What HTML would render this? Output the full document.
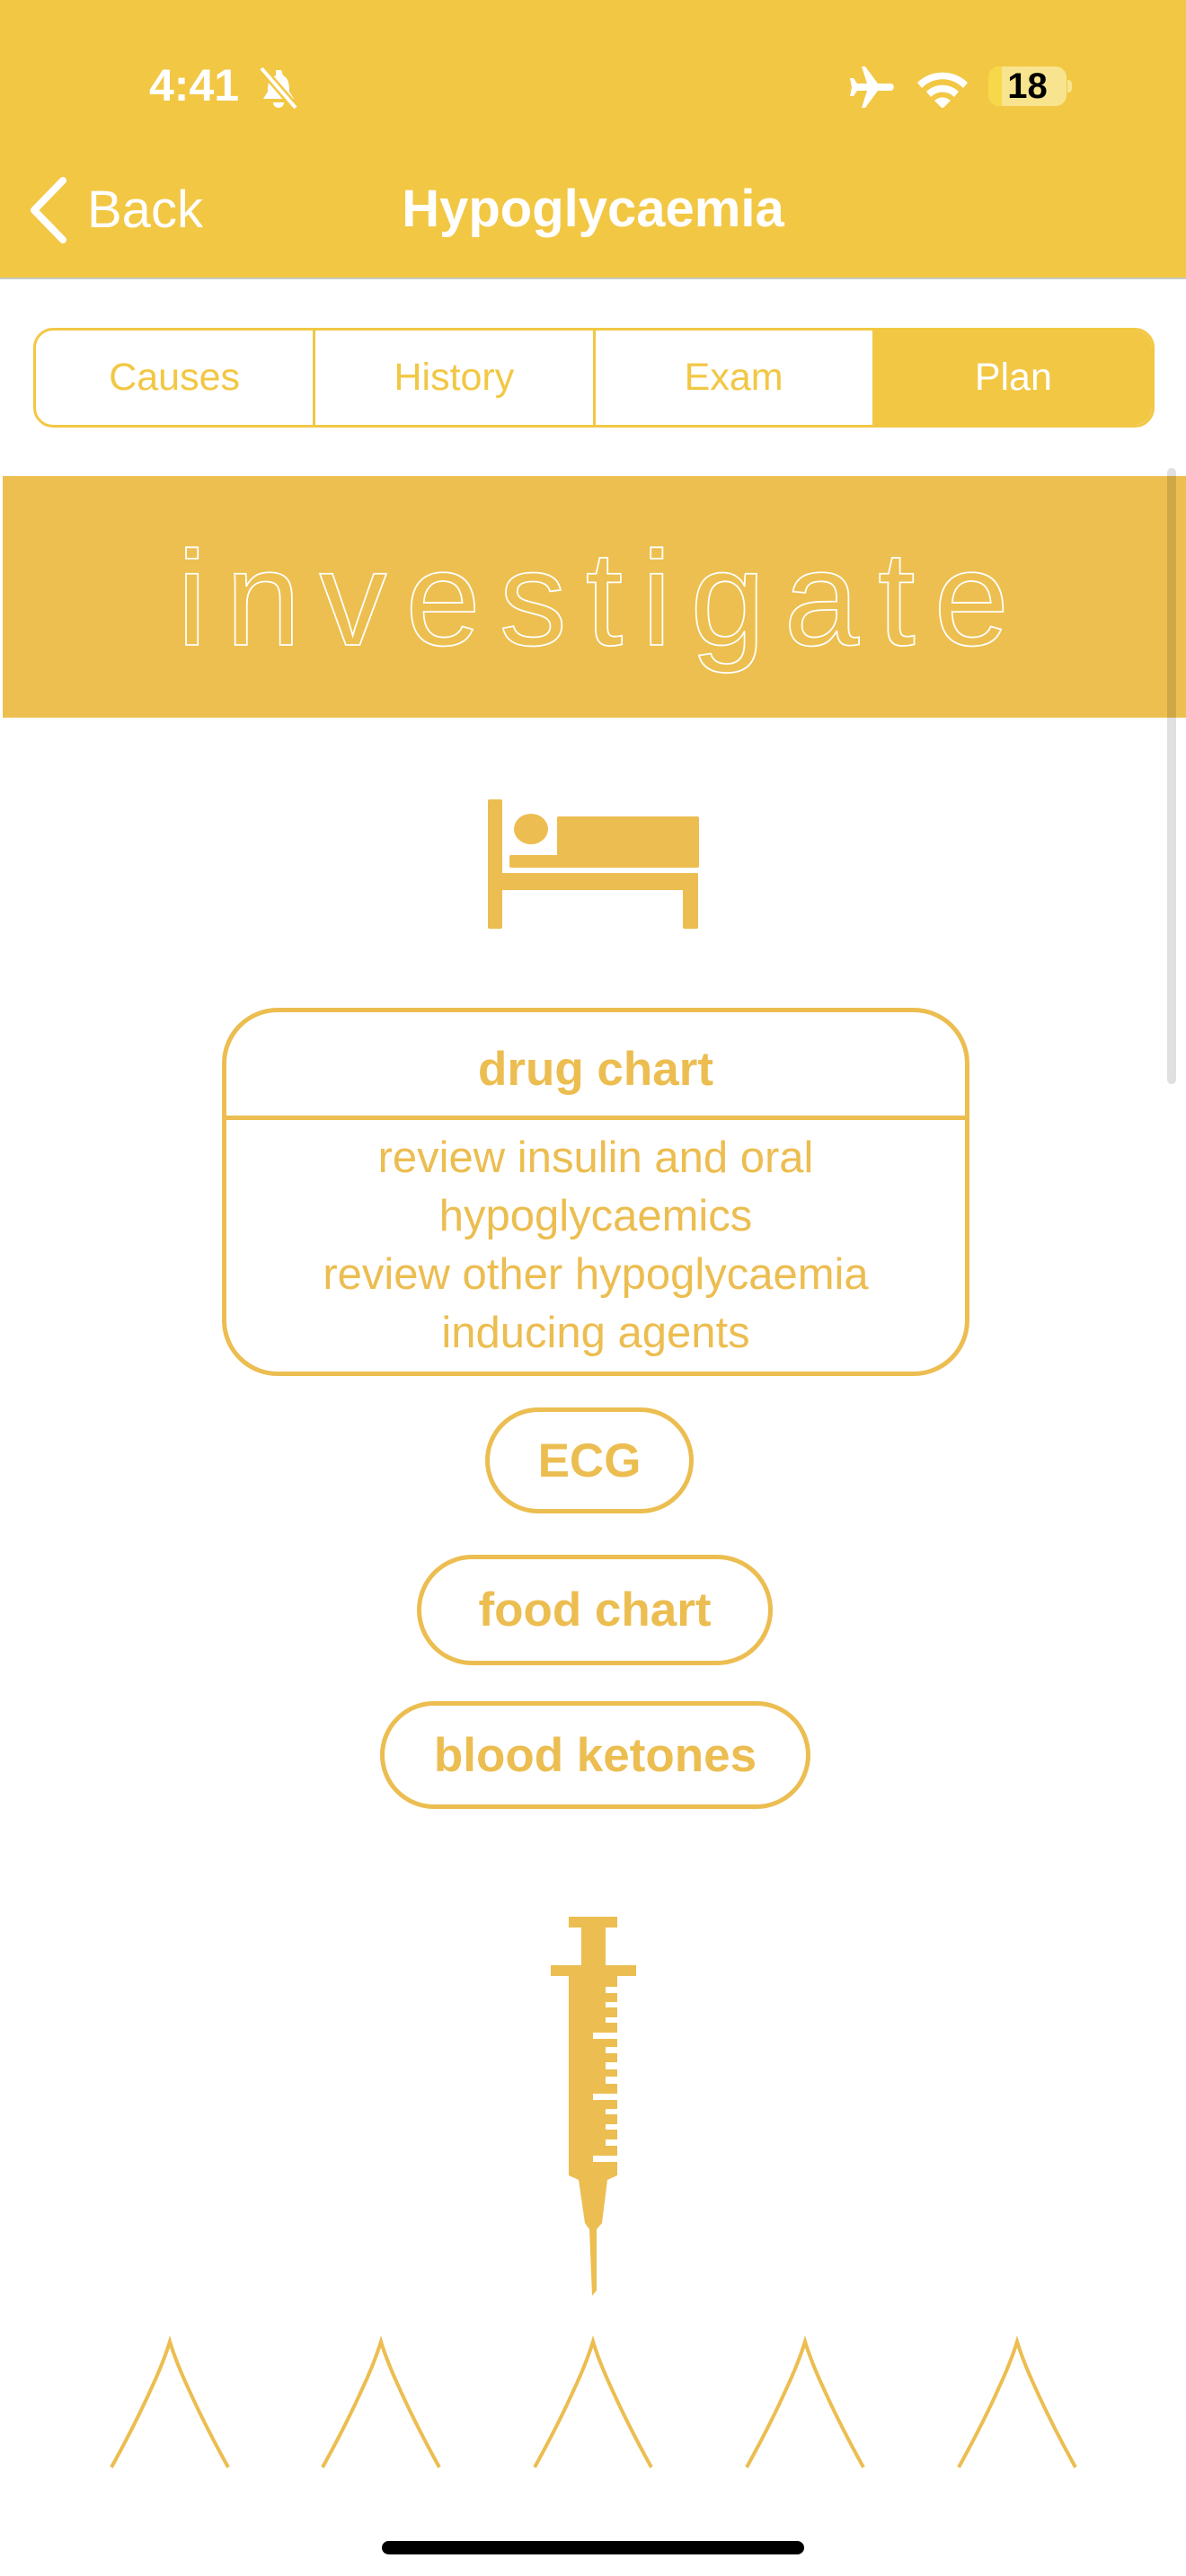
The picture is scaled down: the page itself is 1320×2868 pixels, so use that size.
<!DOCTYPE html>
<html><head><meta charset="utf-8"><style>
*{margin:0;padding:0;box-sizing:border-box}
body{width:1320px;height:2868px;background:#fff;position:relative;overflow:hidden;font-family:"Liberation Sans",sans-serif}
.abs{position:absolute}
#hdr{left:0;top:0;width:1320px;height:311px;background:#f2c744;border-bottom:2px solid #c9c9c9}
.seg{position:absolute;top:365px;height:111px;border:3px solid #f2c744;border-radius:22px;overflow:hidden;left:37px;width:1248px;display:flex}
.seg div{flex:1;display:flex;align-items:center;justify-content:center;color:#f2c744;font-size:43px;border-right:3px solid #f2c744}
.seg div:last-child{border-right:none;background:#f2c744;color:#fff}
.pill{position:absolute;border:5px solid #ecbd50;border-radius:70px;color:#ecbd50;font-weight:bold;font-size:53px;display:flex;align-items:center;justify-content:center}
</style></head><body>
<div id="hdr" class="abs"></div>
<div class="abs" style="left:166px;top:66px;color:#fff;font-size:50px;font-weight:bold">4:41</div>
<svg class="abs" style="left:285px;top:74px" width="50" height="48" viewBox="0 0 50 48"><path d="M22 4h6l2 6c6 3 7 9 7 18l5 8H8l5-8c0-9 1-15 9-18z" fill="#fff"/><path d="M19 40h12a6 6 0 0 1-12 0z" fill="#fff"/><path d="M6 2L44 46" stroke="#f2c744" stroke-width="9"/><path d="M6 2L44 46" stroke="#fff" stroke-width="4"/></svg>
<svg class="abs" style="left:945px;top:74px" width="55" height="46" viewBox="0 0 55 46"><path d="M14 0h4l14 19h14c5 0 5 8 0 8H32L18 46h-4l6-19H9l-4 6H1l2-10-2-10h4l4 6h11z" fill="#fff"/></svg>
<svg class="abs" style="left:1018px;top:74px" width="62" height="46" viewBox="0 0 62 46"><path d="M3 18a40 40 0 0 1 56 0l-5 6a32 32 0 0 0-46 0z" fill="#fff"/><path d="M13 28a26 26 0 0 1 36 0l-5 6a18 18 0 0 0-26 0z" fill="#fff"/><path d="M22 38a13 13 0 0 1 18 0l-9 9z" fill="#fff"/></svg>
<div class="abs" style="left:1100px;top:74px;width:87px;height:44px;border-radius:12px;background:#f8e48e;overflow:hidden"><div style="width:15px;height:44px;background:#f7d84a"></div></div>
<div class="abs" style="left:1188px;top:89px;width:5px;height:14px;border-radius:0 4px 4px 0;background:#f8e48e"></div>
<div class="abs" style="left:1100px;top:74px;width:87px;height:44px;line-height:44px;text-align:center;font-weight:bold;font-size:40px;color:#000">18</div>
<svg class="abs" style="left:28px;top:195px" width="50" height="78" viewBox="0 0 50 78"><path d="M42 6L10 39l32 33" stroke="#fff" stroke-width="8" fill="none" stroke-linecap="round" stroke-linejoin="round"/></svg>
<div class="abs" style="left:97px;top:200px;color:#fff;font-size:58px">Back</div>
<div class="abs" style="left:360px;width:600px;top:199px;color:#fff;font-size:58px;font-weight:bold;text-align:center">Hypoglycaemia</div>

<div class="seg"><div>Causes</div><div>History</div><div>Exam</div><div>Plan</div></div>

<div class="abs" style="left:3px;top:530px;width:1317px;height:269px;background:#ecbf50"></div>
<svg class="abs" style="left:0;top:530px" width="1320" height="269"><text x="197" y="188" textLength="926" lengthAdjust="spacing" font-family="Liberation Sans" font-size="150" fill="#ecbf50" stroke="#fff" stroke-width="1.8">investigate</text></svg>
<div class="abs" style="left:1299px;top:521px;width:10px;height:686px;border-radius:5px;background:rgba(0,0,0,0.12)"></div>

<svg class="abs" style="left:0;top:0" width="1320" height="2868">
<g fill="#ecbd50">
<rect x="543" y="890" width="16" height="144" rx="2"/>
<ellipse cx="591" cy="923" rx="19" ry="17"/>
<rect x="620" y="909" width="158" height="57" rx="2"/>
<rect x="567" y="952" width="60" height="14" rx="2"/>
<rect x="556" y="972" width="221" height="19" rx="2"/>
<rect x="760" y="972" width="17" height="62" rx="2"/>
<rect x="633" y="2134" width="54" height="12"/>
<rect x="647" y="2146" width="27" height="44"/>
<rect x="613" y="2188" width="95" height="12"/>
<path d="M633 2200H687V2422L676 2427L670 2475L664 2482V2550L659 2556L656 2482L651 2475L644 2427L633 2422Z"/>
</g>
<g fill="#fff">
<rect x="674" y="2212" width="14" height="7"/><rect x="674" y="2229" width="14" height="6"/><rect x="674" y="2246" width="14" height="6"/>
<rect x="660" y="2263" width="28" height="7"/>
<rect x="674" y="2279" width="14" height="7"/><rect x="674" y="2296" width="14" height="8"/><rect x="674" y="2312" width="14" height="8"/>
<rect x="660" y="2331" width="28" height="7"/>
<rect x="674" y="2348" width="14" height="6"/><rect x="674" y="2365" width="14" height="6"/><rect x="674" y="2382" width="14" height="7"/>
<rect x="660" y="2400" width="28" height="7"/>
</g>
<g stroke="#ecbd50" stroke-width="4" fill="none">
<path d="M124 2747Q150 2700 168 2660Q182 2630 189 2607Q196 2630 210 2660Q228 2700 254 2747"/>
<path d="M359 2747Q385 2700 403 2660Q417 2630 424 2607Q431 2630 445 2660Q463 2700 489 2747"/>
<path d="M595 2747Q621 2700 639 2660Q653 2630 660 2607Q667 2630 681 2660Q699 2700 725 2747"/>
<path d="M831 2747Q857 2700 875 2660Q889 2630 896 2607Q903 2630 917 2660Q935 2700 961 2747"/>
<path d="M1067 2747Q1093 2700 1111 2660Q1125 2630 1132 2607Q1139 2630 1153 2660Q1171 2700 1197 2747"/>
</g>
<rect x="425" y="2829" width="470" height="15" rx="7.5" fill="#000"/>
</svg>

<div class="abs" style="left:247px;top:1122px;width:832px;height:410px;border:5px solid #ecbd50;border-radius:62px"></div>
<div class="abs" style="left:249px;top:1242px;width:828px;height:5px;background:#ecbd50"></div>
<div class="abs" style="left:247px;width:832px;top:1160px;text-align:center;color:#ecbd50;font-weight:bold;font-size:53px">drug chart</div>
<div class="abs" style="left:247px;width:832px;top:1257px;text-align:center;color:#ecbd50;font-size:49px;line-height:65px">review insulin and oral<br>hypoglycaemics<br>review other hypoglycaemia<br>inducing agents</div>

<div class="pill" style="left:540px;top:1567px;width:232px;height:118px">ECG</div>
<div class="pill" style="left:464px;top:1731px;width:396px;height:123px">food chart</div>
<div class="pill" style="left:423px;top:1894px;width:479px;height:120px">blood ketones</div>
</body></html>
